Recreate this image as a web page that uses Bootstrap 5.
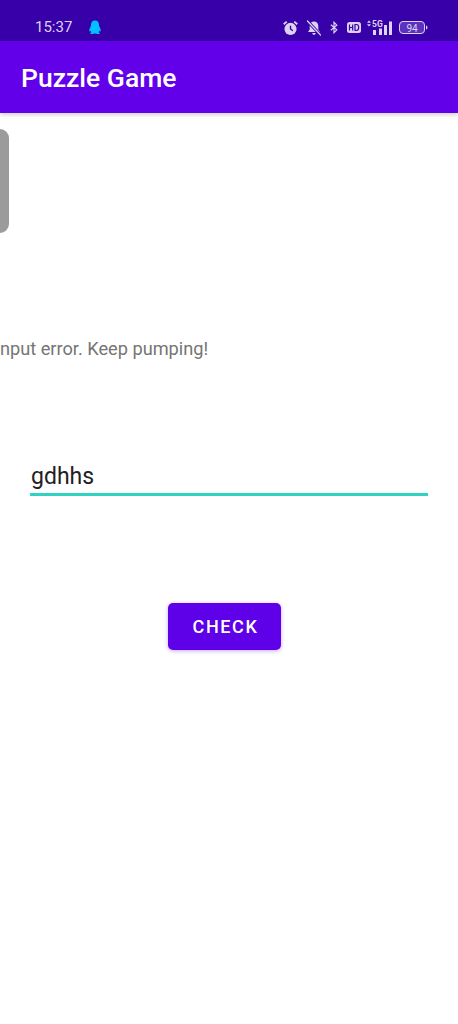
<!DOCTYPE html>
<html lang="en">
<head>
  <meta charset="UTF-8" />
  <meta name="viewport" content="width=device-width, initial-scale=1.0"/>
  <title>Puzzle Game</title>
  <link href="https://cdn.jsdelivr.net/npm/bootstrap@5.3.0/dist/css/bootstrap.min.css" rel="stylesheet"/>
  <style>
    body {
      font-family: Roboto, sans-serif;
      background-color: #fff;
      height: 1024px;
      overflow: hidden;
    }
    .status-bar {
      height: 41px;
      background-color: #3700a8;
      color: #ddd2f2;
      padding: 14px 30px 0 35px;
    }
    .status-time { font-size: 15px; }
    .status-icons svg { display: block; margin-left: 9px; }
    .status-icons svg.tight { margin-left: 6px; }
    .app-bar {
      height: 72px;
      background-color: #6200ea;
      color: #fff;
      padding: 2px 0 0 21px;
      font-size: 26.5px;
      font-weight: 500;
      box-shadow: 0 2px 4px rgba(0,0,0,.18);
    }
    .puzzle-clip { padding-top: 16px; height: 120px; }
    .puzzle-tile {
      width: 9px;
      height: 104px;
      background-color: #9a9b9a;
      border-radius: 0 9px 9px 0;
    }
    .hint-text {
      margin-top: 104px;
      margin-left: -5px;
      height: 24px;
      line-height: 24px;
      font-size: 18.2px;
      color: #757575;
      white-space: nowrap;
    }
    .answer-wrap { margin: 101px 30px 0 30px; }
    .answer-input {
      font-family: Roboto, sans-serif;
      border: 0;
      border-bottom: 3px solid #30d2c2;
      border-radius: 0;
      padding: 0 1px 1px;
      height: 34px;
      font-size: 23px;
      color: #212121;
      box-shadow: none !important;
    }
    .answer-input:focus { border-bottom-color: #30d2c2; }
    .check-btn {
      width: 113px;
      height: 47px;
      background-color: #5e00e8;
      border: 0;
      border-radius: 5px;
      color: #fff;
      font-size: 18px;
      font-weight: 500;
      letter-spacing: 1.6px;
      box-shadow: 0 1px 4px rgba(98,0,238,.35);
      margin: 107px 0 0 -9px;
      padding: 0 0 0 2px;
    }
    .check-btn:hover { background-color: #5e00e8; color: #fff; }
  </style>
</head>
<body>

  <!-- Status bar -->
  <div class="status-bar d-flex align-items-center justify-content-between">
    <div class="d-flex align-items-center gap-3">
      <span class="status-time">15:37</span>
      <svg width="14" height="15" viewBox="0 0 16 17"><path fill="#00c0ff" d="M8 .5c3 0 4.600 2.300 4.600 5.200 0 1 .3 1.600 .9 2.700 .8 1.500 1.300 3 .9 4.300-.3.700-1 .2-1.500-.6-.2.800-.5 1.300-1 1.800 1 .3 1.600.8 1.500 1.400-.1.600-1.600.7-3 .5-.9-.1-1.300-.5-2.400-.5s-1.500.4-2.400.5c-1.400.2-2.900.1-3-.5-.1-.6.500-1.100 1.500-1.400-.5-.5-.8-1-1-1.800-.5.800-1.200 1.300-1.500.6-.4-1.300.1-2.800.9-4.300.6-1.100.9-1.700.9-2.700C3.400 2.800 5 .5 8 .5z"/></svg>
    </div>
    <div class="status-icons d-flex align-items-center">
      <svg width="15" height="16" viewBox="0 0 16 16"><circle cx="8" cy="9" r="6.500" fill="#ddd2f2"/><path d="M8 5.500V9l2.500 2" fill="none" stroke="#3700a8" stroke-width="1.500"/><path d="M.8 4 4 1.200M15.200 4 12 1.200" stroke="#ddd2f2" stroke-width="2"/></svg>
      <svg width="14" height="16" viewBox="1 0 14 16"><path fill="#ddd2f2" d="M8 1.500c2.700 0 4.300 2 4.300 4.500v3.500l1.700 2.500H2l1.700-2.500V6C3.700 3.500 5.300 1.500 8 1.500zM6.300 13h3.400c0 1-.7 1.800-1.700 1.800S6.300 14 6.300 13z"/><path d="M1 .5 15 15.500" stroke="#3700a8" stroke-width="3"/><path d="M1 .5 15 15.500" stroke="#ddd2f2" stroke-width="1.300"/></svg>
      <svg width="8" height="15" viewBox="0 0 10 16"><path d="M1 4.500 8.500 11 5 14.500V1.500L8.500 5 1 11.500" fill="none" stroke="#ddd2f2" stroke-width="1.500"/></svg>
      <svg width="14" height="11" viewBox="0 0 14 11"><rect width="14" height="11" rx="2.500" fill="#ddd2f2"/><path d="M2.500 2.500v6M5.700 2.500v6M2.500 5.500h3.200M8 2.500v6h1.300c1.500 0 2.400-1 2.400-3s-.9-3-2.400-3z" fill="none" stroke="#3700a8" stroke-width="1.200"/></svg>
      <svg class="tight" width="26" height="16" viewBox="0 0 26 16"><path d="M0 2.700 2 .5 4 2.700zM0 4.300 2 6.500 4 4.300z" fill="#ddd2f2"/><text x="5" y="7" font-family="Roboto" font-size="8.500" font-weight="700" fill="#ddd2f2">5G</text><path d="M6 10h3v5H6zM12 8.500h3V15h-3zM17 5h3v10h-3zM22 1.500h3V15h-3z" fill="#ddd2f2"/></svg>
      <svg class="tight" width="29" height="13" viewBox="0 0 29 13"><rect x=".5" y=".5" width="25" height="12" rx="3.500" fill="#5a32bd" stroke="#ddd2f2"/><path d="M27 4.500c1 .3 1.500 1 1.500 2s-.5 1.700-1.500 2z" fill="#ddd2f2"/><text x="13" y="10.500" text-anchor="middle" font-family="Roboto" font-size="10" fill="#ddd2f2">94</text></svg>
    </div>
  </div>

  <!-- App bar -->
  <div class="app-bar d-flex align-items-center">Puzzle Game</div>

  <!-- Main -->
  <div class="puzzle-clip"><div class="puzzle-tile"></div></div>
  <div class="hint-text">Input error. Keep pumping!</div>
  <div class="answer-wrap">
    <input type="text" class="form-control answer-input" value="gdhhs"/>
  </div>
  <div class="d-flex justify-content-center">
    <button type="button" class="btn check-btn">CHECK</button>
  </div>

  <script src="https://cdn.jsdelivr.net/npm/bootstrap@5.3.0/dist/js/bootstrap.bundle.min.js"></script>
</body>
</html>
